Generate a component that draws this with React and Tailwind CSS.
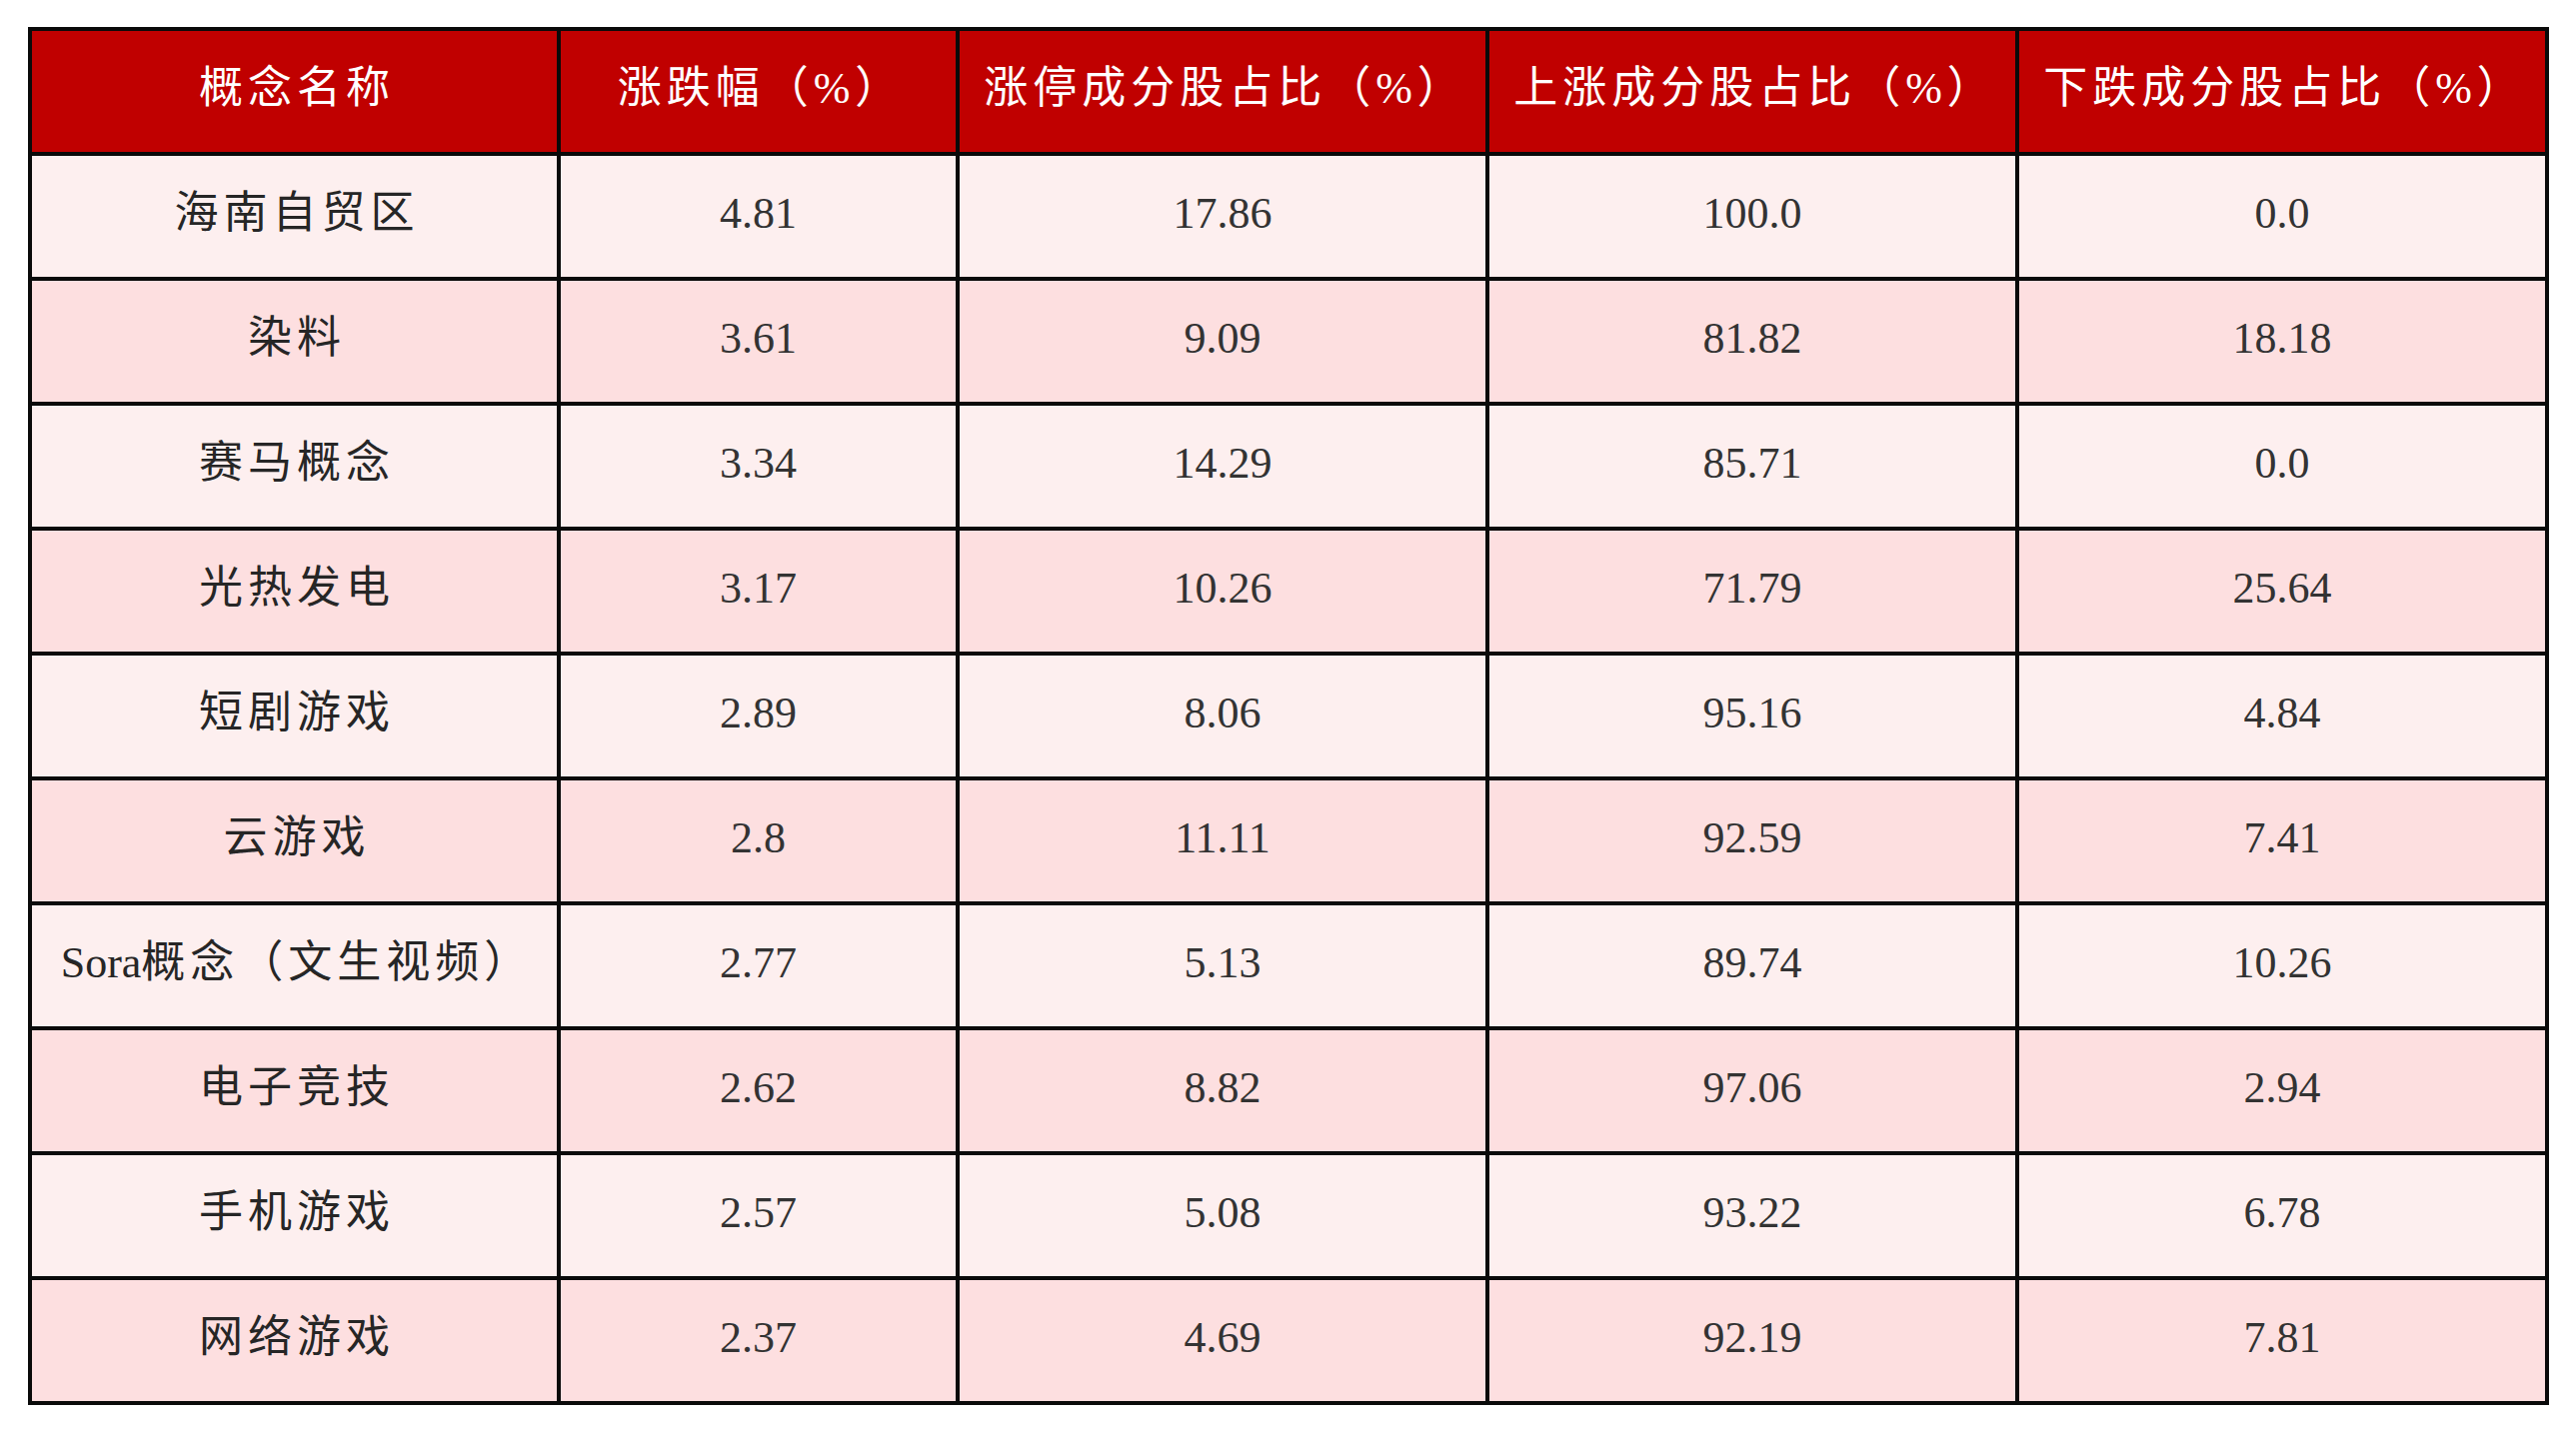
const headers = [
  "概念名称",
  "涨跌幅（%）",
  "涨停成分股占比（%）",
  "上涨成分股占比（%）",
  "下跌成分股占比（%）",
];

const rows = [
  ["海南自贸区", "4.81", "17.86", "100.0", "0.0"],
  ["染料", "3.61", "9.09", "81.82", "18.18"],
  ["赛马概念", "3.34", "14.29", "85.71", "0.0"],
  ["光热发电", "3.17", "10.26", "71.79", "25.64"],
  ["短剧游戏", "2.89", "8.06", "95.16", "4.84"],
  ["云游戏", "2.8", "11.11", "92.59", "7.41"],
  ["Sora概念（文生视频）", "2.77", "5.13", "89.74", "10.26"],
  ["电子竞技", "2.62", "8.82", "97.06", "2.94"],
  ["手机游戏", "2.57", "5.08", "93.22", "6.78"],
  ["网络游戏", "2.37", "4.69", "92.19", "7.81"],
];

const font = {
  fontFamily: '"Liberation Serif", "Noto Sans CJK SC", serif',
};

// latin prefix (e.g. "Sora") is not letter-spaced in the source
function Name({ text }) {
  const m = text.match(/^([A-Za-z]+)(.*)$/);
  if (!m) return text;
  return (
    <>
      <span className="tracking-normal">{m[1]}</span>
      {m[2]}
    </>
  );
}

export default function App() {
  return (
    <div className="min-h-screen bg-white pt-[27px] pl-[28px]" style={font}>
      <div className="grid w-[2522px] grid-cols-[525px_395px_526px_526px_526px] auto-rows-[121px] gap-[4px] bg-[#0a0a0a] p-[4px]">
        {headers.map((h) => (
          <div
            key={h}
            className="flex items-center justify-center bg-[#c00000] pb-[5px] pl-[5px] text-[44px] tracking-[5px] text-white"
          >
            {h}
          </div>
        ))}
        {rows.map((row, i) =>
          row.map((cell, j) => (
            <div
              key={i + "-" + j}
              className={
                "flex items-center justify-center whitespace-nowrap pb-[5px] text-[44px] " +
                (j === 0 ? "pl-[5px] tracking-[5px] text-[#262626] " : "text-[#333333] ") +
                (i % 2 === 0 ? "bg-[#fdefef]" : "bg-[#fddfe0]")
              }
            >
              {j === 0 ? <Name text={cell} /> : cell}
            </div>
          ))
        )}
      </div>
    </div>
  );
}
